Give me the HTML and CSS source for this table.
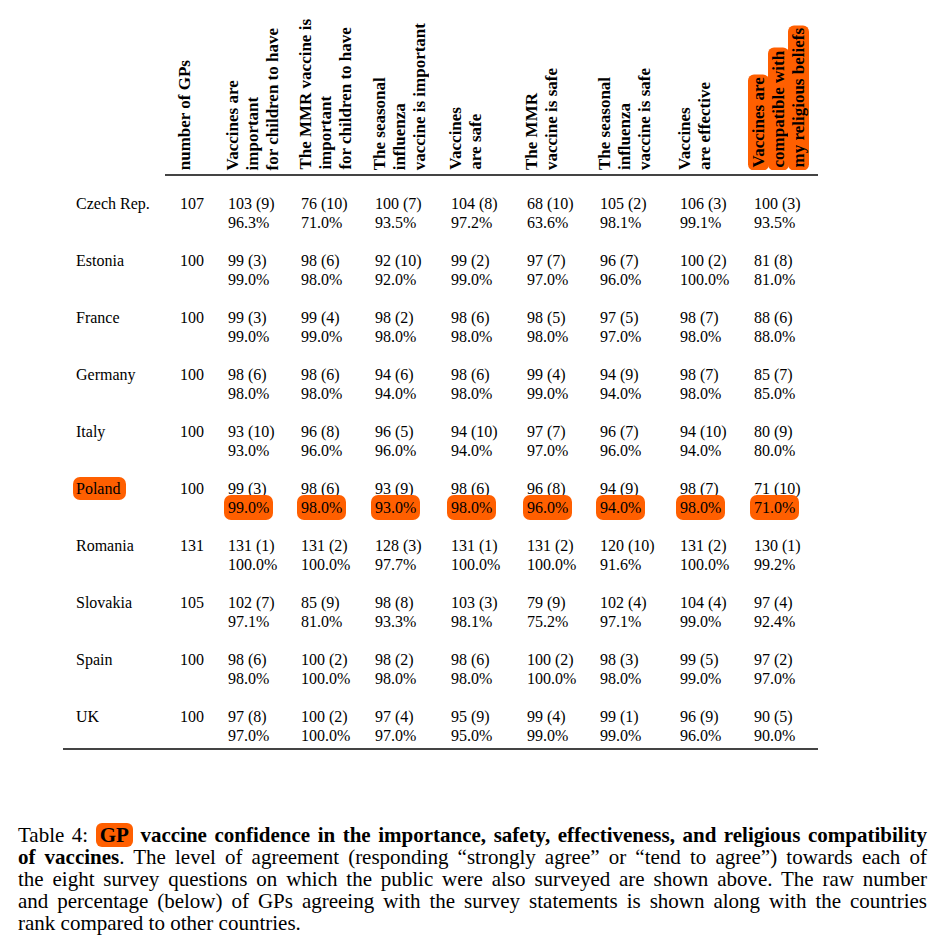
FILE: index.html
```html
<!DOCTYPE html>
<html lang="en">
<head>
<meta charset="utf-8">
<title>Table 4: GP vaccine confidence</title>
<link rel="stylesheet" href="styles.css">
</head>
<body>
<div class="page">
  <div class="table">
    <div class="head">
      <div></div>
      <div class="hd">number of GPs</div>
      <div class="hd">Vaccines are<br>important<br>for children to have</div>
      <div class="hd">The MMR vaccine is<br>important<br>for children to have</div>
      <div class="hd">The seasonal<br>influenza<br>vaccine is important</div>
      <div class="hd">Vaccines<br>are safe</div>
      <div class="hd">The MMR<br>vaccine is safe</div>
      <div class="hd">The seasonal<br>influenza<br>vaccine is safe</div>
      <div class="hd">Vaccines<br>are effective</div>
      <div class="hd"><span class="mark-v">Vaccines are<br>compatible with<br>my religious beliefs</span></div>
    </div>
    <div class="rule-top"></div>
    <div class="rows">
      <div class="row"><div>Czech Rep.</div><div>107</div><div>103 (9)<br>96.3%</div><div>76 (10)<br>71.0%</div><div>100 (7)<br>93.5%</div><div>104 (8)<br>97.2%</div><div>68 (10)<br>63.6%</div><div>105 (2)<br>98.1%</div><div>106 (3)<br>99.1%</div><div>100 (3)<br>93.5%</div></div>
      <div class="row"><div>Estonia</div><div>100</div><div>99 (3)<br>99.0%</div><div>98 (6)<br>98.0%</div><div>92 (10)<br>92.0%</div><div>99 (2)<br>99.0%</div><div>97 (7)<br>97.0%</div><div>96 (7)<br>96.0%</div><div>100 (2)<br>100.0%</div><div>81 (8)<br>81.0%</div></div>
      <div class="row"><div>France</div><div>100</div><div>99 (3)<br>99.0%</div><div>99 (4)<br>99.0%</div><div>98 (2)<br>98.0%</div><div>98 (6)<br>98.0%</div><div>98 (5)<br>98.0%</div><div>97 (5)<br>97.0%</div><div>98 (7)<br>98.0%</div><div>88 (6)<br>88.0%</div></div>
      <div class="row"><div>Germany</div><div>100</div><div>98 (6)<br>98.0%</div><div>98 (6)<br>98.0%</div><div>94 (6)<br>94.0%</div><div>98 (6)<br>98.0%</div><div>99 (4)<br>99.0%</div><div>94 (9)<br>94.0%</div><div>98 (7)<br>98.0%</div><div>85 (7)<br>85.0%</div></div>
      <div class="row"><div>Italy</div><div>100</div><div>93 (10)<br>93.0%</div><div>96 (8)<br>96.0%</div><div>96 (5)<br>96.0%</div><div>94 (10)<br>94.0%</div><div>97 (7)<br>97.0%</div><div>96 (7)<br>96.0%</div><div>94 (10)<br>94.0%</div><div>80 (9)<br>80.0%</div></div>
      <div class="row"><div><span class="mark-name">Poland</span></div><div>100</div><div>99 (3)<br><span class="mark">99.0%</span></div><div>98 (6)<br><span class="mark">98.0%</span></div><div>93 (9)<br><span class="mark">93.0%</span></div><div>98 (6)<br><span class="mark">98.0%</span></div><div>96 (8)<br><span class="mark">96.0%</span></div><div>94 (9)<br><span class="mark">94.0%</span></div><div>98 (7)<br><span class="mark">98.0%</span></div><div>71 (10)<br><span class="mark">71.0%</span></div></div>
      <div class="row"><div>Romania</div><div>131</div><div>131 (1)<br>100.0%</div><div>131 (2)<br>100.0%</div><div>128 (3)<br>97.7%</div><div>131 (1)<br>100.0%</div><div>131 (2)<br>100.0%</div><div>120 (10)<br>91.6%</div><div>131 (2)<br>100.0%</div><div>130 (1)<br>99.2%</div></div>
      <div class="row"><div>Slovakia</div><div>105</div><div>102 (7)<br>97.1%</div><div>85 (9)<br>81.0%</div><div>98 (8)<br>93.3%</div><div>103 (3)<br>98.1%</div><div>79 (9)<br>75.2%</div><div>102 (4)<br>97.1%</div><div>104 (4)<br>99.0%</div><div>97 (4)<br>92.4%</div></div>
      <div class="row"><div>Spain</div><div>100</div><div>98 (6)<br>98.0%</div><div>100 (2)<br>100.0%</div><div>98 (2)<br>98.0%</div><div>98 (6)<br>98.0%</div><div>100 (2)<br>100.0%</div><div>98 (3)<br>98.0%</div><div>99 (5)<br>99.0%</div><div>97 (2)<br>97.0%</div></div>
      <div class="row"><div>UK</div><div>100</div><div>97 (8)<br>97.0%</div><div>100 (2)<br>100.0%</div><div>97 (4)<br>97.0%</div><div>95 (9)<br>95.0%</div><div>99 (4)<br>99.0%</div><div>99 (1)<br>99.0%</div><div>96 (9)<br>96.0%</div><div>90 (5)<br>90.0%</div></div>
    </div>
    <div class="rule-bottom"></div>
  </div>
  <p class="caption">
    <span class="cl">Table 4: <b><span class="mark-cap">GP</span> vaccine confidence in the importance, safety, effectiveness, and religious compatibility</b></span>
    <span class="cl"><b>of vaccines</b>. The level of agreement (responding “strongly agree” or “tend to agree”) towards each of</span>
    <span class="cl">the eight survey questions on which the public were also surveyed are shown above. The raw number</span>
    <span class="cl">and percentage (below) of GPs agreeing with the survey statements is shown along with the countries</span>
    <span class="cl cl-last">rank compared to other countries.</span>
  </p>
</div>
</body>
</html>
```

FILE: styles.css
```css
:root {
  --cols: 104px 48px 73px 74px 76px 76px 73px 80px 74px 64px;
  --orange: #ff5f00;
}

* {
  box-sizing: border-box;
}

body {
  margin: 0;
  background: #ffffff;
  color: #000000;
  font-family: "Liberation Serif", "Times New Roman", serif;
}

.page {
  width: 944px;
  height: 948px;
  overflow: hidden;
}

.table {
  margin-left: 63px;
  width: 755px;
}

.head {
  display: grid;
  grid-template-columns: var(--cols);
  align-items: end;
  height: 174px;
  padding-left: 13px;
  padding-bottom: 4px;
}

.hd {
  writing-mode: vertical-rl;
  transform: rotate(180deg);
  font-weight: bold;
  font-size: 17px;
  line-height: 20px;
  white-space: nowrap;
  justify-self: start;
  margin-left: -5px;
}

.mark-v {
  background: var(--orange);
  border-radius: 6px;
  padding: 3px 1px;
  -webkit-box-decoration-break: clone;
  box-decoration-break: clone;
}

.rule-top {
  margin-left: 102px;
  height: 2px;
  background: #444444;
}

.rows {
  display: flex;
  flex-direction: column;
  gap: 19px;
  padding-top: 18px;
  padding-bottom: 3px;
  padding-left: 13px;
  font-size: 16px;
  line-height: 19px;
}

.row {
  display: grid;
  grid-template-columns: var(--cols);
  height: 38px;
}

.mark {
  background: var(--orange);
  border-radius: 7px;
  padding: 4px 4px;
  margin-left: -4px;
}

.mark-name {
  background: var(--orange);
  border-radius: 7px;
  padding: 3px 6px 3px 3px;
  margin-left: -3px;
}

.rule-bottom {
  height: 2px;
  background: #444444;
}

.caption {
  margin: 74px 0 0 18px;
  width: 909px;
  font-size: 21px;
  line-height: 22px;
}

.cl {
  display: block;
  text-align: justify;
  text-align-last: justify;
}

.cl-last {
  text-align: left;
  text-align-last: left;
}

.mark-cap {
  background: var(--orange);
  border-radius: 6px;
  padding: 0 4px;
}
```
